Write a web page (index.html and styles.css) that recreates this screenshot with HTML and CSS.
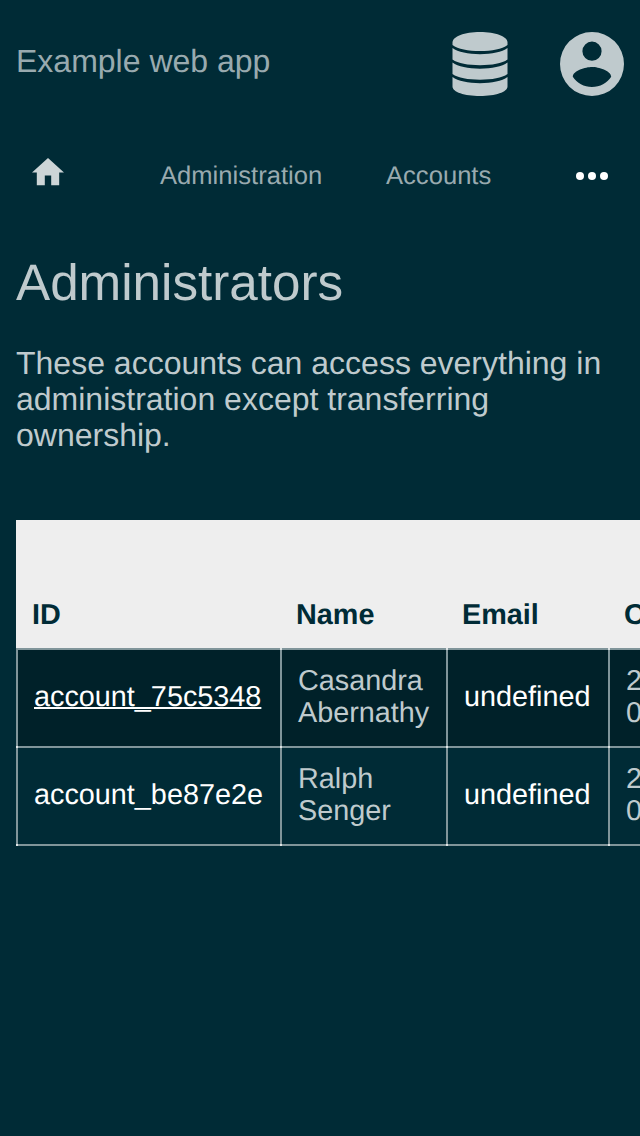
FILE: index.html
```html
<!DOCTYPE html>
<html lang="en">
<head>
<meta charset="utf-8">
<title>Administrators</title>
<link rel="stylesheet" href="styles.css">
</head>
<body>
<header class="header">
  <span class="brand">Example web app</span>
  <div class="header-icons">
    <svg class="icon-database" viewBox="0 0 56 64" fill="currentColor"><path d="M28 0C43.500 0 55.500 4.500 55.500 10.500V13C50 17 40 19 28 19S6 17 .5 13V10.500C.5 4.500 12.500 0 28 0Z"/><path d="M.5 16C6 20 16 22.200 28 22.200S50 20 55.500 16V27.500C50 31.500 40 33.200 28 33.200S6 31.500 .5 27.500Z"/><path d="M.5 30.500C6 34.500 16 36.700 28 36.700S50 34.500 55.500 30.500V42C50 46 40 47.700 28 47.700S6 46 .5 42Z"/><path d="M.5 45C6 49 16 51.200 28 51.200S50 49 55.500 45V54.500C55.500 60 43.500 64 28 64S.5 60 .5 54.500Z"/></svg>
    <svg class="icon-account" viewBox="0 0 64 64" fill="currentColor"><path fill-rule="evenodd" d="M32 0a32 32 0 1 0 0 64 32 32 0 0 0 0-64ZM32 9.600a9.600 9.600 0 1 1 0 19.200 9.600 9.600 0 0 1 0-19.200ZM32 55.040C24 55.040 16.930 50.940 12.800 44.740 12.900 38.370 25.600 34.880 32 34.880S51.100 38.370 51.200 44.740C47.070 50.940 40 55.040 32 55.040Z"/></svg>
  </div>
</header>
<nav class="nav">
  <svg class="icon-home" viewBox="0 0 32 27.200" fill="currentColor"><path d="M12.800 27.200V17.600h6.400v9.600h8V14.400H32L16 0 0 14.400h4.800v12.800Z"/></svg>
  <a class="nav-link">Administration</a>
  <a class="nav-link">Accounts</a>
  <svg class="icon-more" viewBox="0 0 32 8" fill="#fff"><circle cx="4" cy="4" r="4"/><circle cx="16" cy="4" r="4"/><circle cx="28" cy="4" r="4"/></svg>
</nav>
<main class="main">
  <h1 class="title">Administrators</h1>
  <p class="intro">These accounts can access everything in administration except transferring ownership.</p>
  <div class="table">
    <div class="row head"><span>ID</span><span>Name</span><span>Email</span><span>Created</span></div>
    <div class="row shaded"><div class="cell"><a class="link underlined">account_75c5348</a></div><div class="cell">Casandra<br>Abernathy</div><div class="cell link">undefined</div><div class="cell">2023<br>01</div></div>
    <div class="row"><div class="cell"><a class="link">account_be87e2e</a></div><div class="cell">Ralph<br>Senger</div><div class="cell link">undefined</div><div class="cell">2023<br>01</div></div>
  </div>
</main>
</body>
</html>
```
FILE: styles.css
```css
* { box-sizing: border-box; }
html { overflow: hidden; }
body {
  margin: 0;
  width: 640px;
  height: 1136px;
  overflow: hidden;
  background: #002b36;
  color: #bfcacd;
  font-family: "Liberation Sans", Arial, sans-serif;
  font-size: 32px;
  text-rendering: geometricPrecision;
}
svg { display: block; }
.header {
  display: flex;
  justify-content: space-between;
  height: 128px;
  padding: 32px 16px;
}
.brand { color: #99aaaf; line-height: 36px; margin-top: 11px; }
.header-icons { display: flex; gap: 52px; }
.icon-database { width: 56px; height: 64px; }
.icon-account { width: 64px; height: 64px; }
.nav {
  display: grid;
  grid-template-columns: 128px 226px 190px 32px;
  align-items: start;
  height: 96px;
  padding: 30px 32px 0;
  color: #99aaaf;
  font-size: 25.6px;
  line-height: 30px;
}
.nav-link { margin-top: 3px; }
.icon-home { width: 32px; height: 27.2px; color: #ccd5d7; margin-top: 0.4px; }
.icon-more { width: 32px; height: 8px; margin-top: 14px; }
.main { padding: 30px 16px 0; }
.title { margin: 0; font-size: 51.2px; font-weight: normal; line-height: 58px; }
.intro { margin: 33px 0 67px; line-height: 36px; }
.table { width: 900px; font-size: 28.8px; line-height: 32px; }
.row { display: grid; grid-template-columns: 264px 166px 162px 308px; }
.head {
  height: 128px;
  align-items: end;
  padding-bottom: 17px;
  background: #eee;
  color: #002b36;
  font-weight: bold;
}
.head span { padding-left: 16px; }
.shaded { background: #002129; border-top: 2px solid #80959a; }
.cell {
  position: relative;
  display: flex;
  align-items: center;
  height: 98px;
  padding: 0 0 2px 16px;
  border-left: 2px solid #80959a;
  border-bottom: 2px solid #80959a;
}
.cell::after {
  content: "";
  position: absolute;
  left: -2px;
  bottom: -2px;
  width: 2px;
  height: 2px;
  background: #dfe5e6;
}
.shaded .cell + .cell::before {
  content: "";
  position: absolute;
  left: -2px;
  top: -2px;
  width: 2px;
  height: 2px;
  background: #dfe5e6;
}
.link { color: #fff; }
.underlined { text-decoration: underline; text-decoration-thickness: 2px; text-decoration-skip-ink: none; }
```
